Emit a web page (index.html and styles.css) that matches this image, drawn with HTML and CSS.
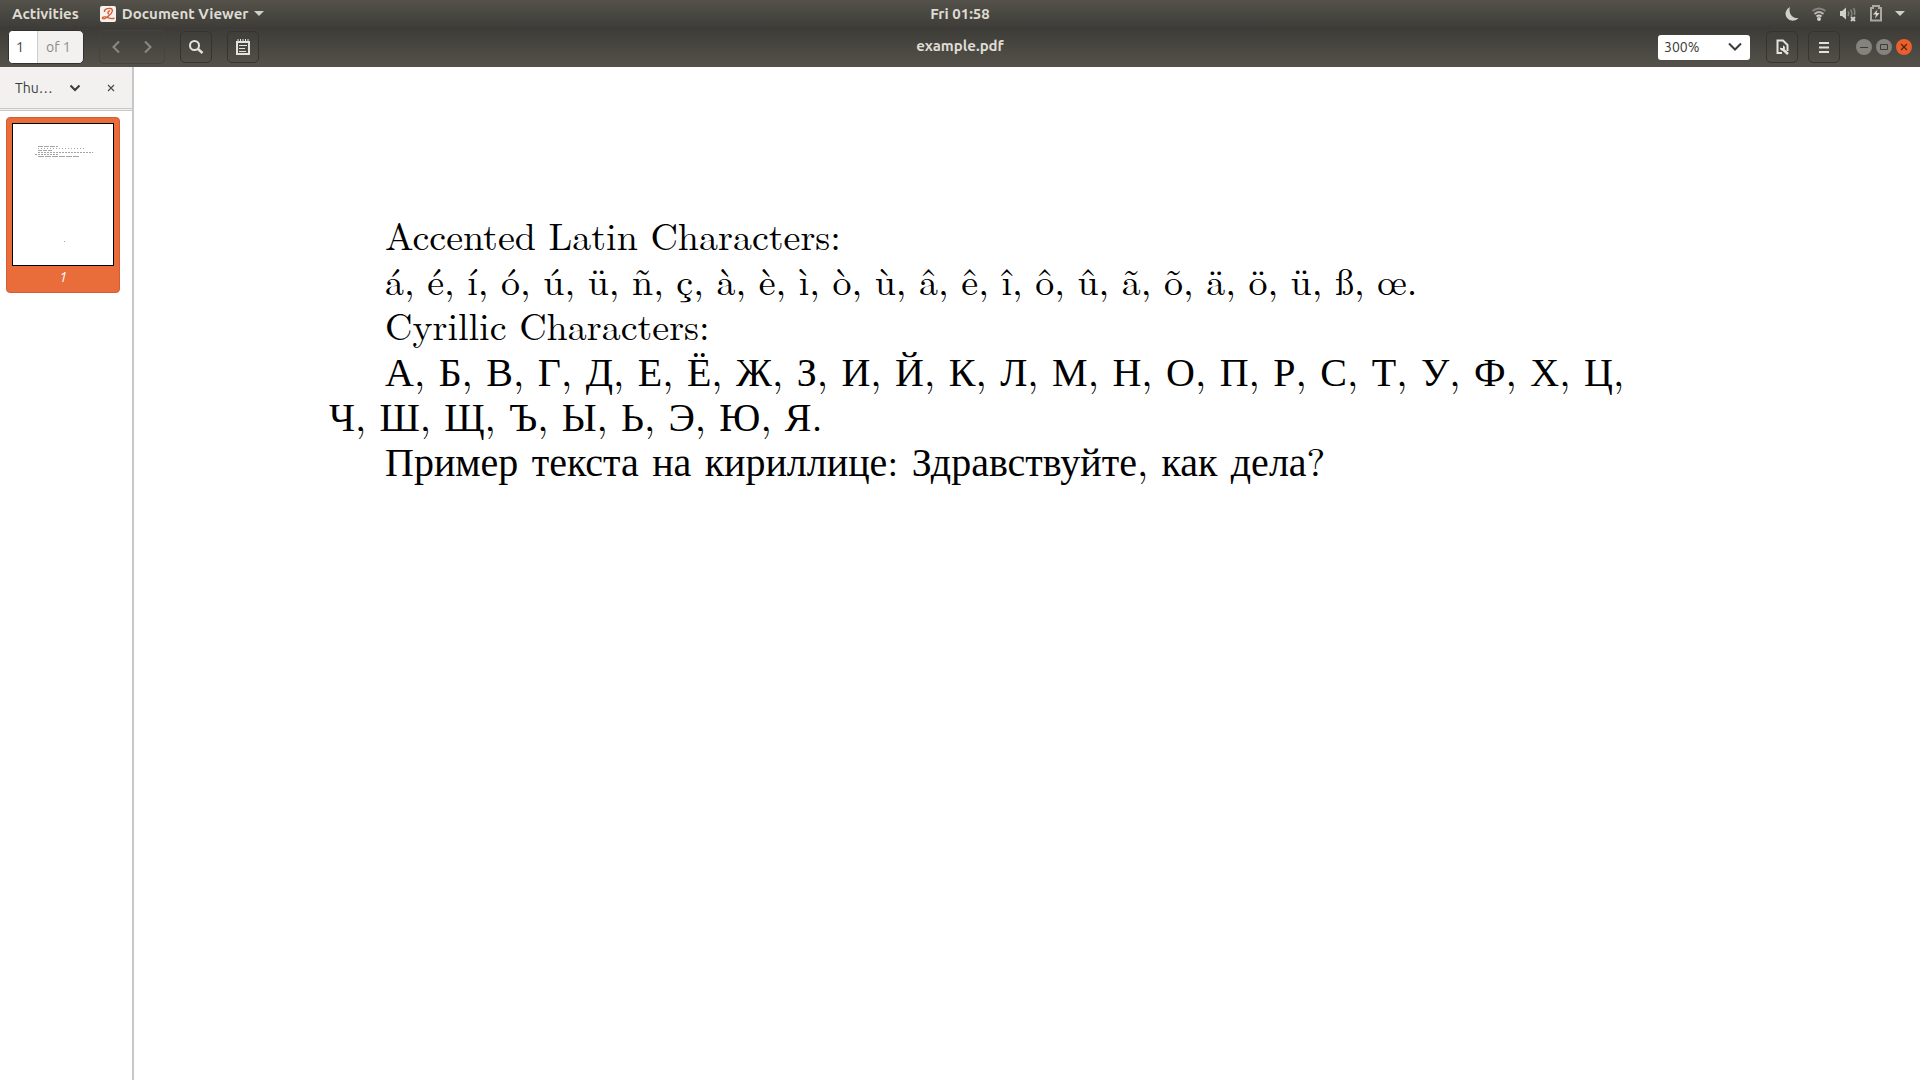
FILE: index.html
```
<!DOCTYPE html>
<html lang="en">
<head>
  <meta charset="UTF-8">
  <title>example.pdf</title>
  <link rel="stylesheet" href="styles.css">
</head>
<body>
  <header class="chrome">
    <div class="topbar">
      <div class="topbar-left">
        <button class="menu-item">Activities</button>
        <button class="menu-item app-menu">
          <svg width="16" height="16" viewBox="0 0 16 16"><rect width="16" height="16" rx="2" fill="#f4f2ef"/><path d="M4.500 6C4 3 8 2 10.500 2.500C14 3.500 12 7 9.500 9C7.500 11 4 13.500 2.500 12.500C2 10.500 6 10.500 8 11.500C10 13 12.500 12.800 14.500 12.300M10 5C8 4.500 7 7.500 9 8" fill="none" stroke="#dd5a31" stroke-width="1.400"/></svg>
          <span>Document Viewer</span>
          <svg width="10" height="6" viewBox="0 0 10 6"><path d="M0 0h10L5 5z" fill="#d0cfca"/></svg>
        </button>
      </div>
      <button class="menu-item clock">Fri 01:58</button>
      <div class="tray">
        <svg width="14" height="16" viewBox="0 0 14 16"><path d="M5 1A7.200 7.200 0 1 0 13.500 12C7.500 13 3 7 5 1z" fill="#d0cfca"/></svg>
        <svg width="16" height="16" viewBox="0 0 16 16" fill="none" stroke-width="2"><path d="M1.500 5Q8 0 14.500 5" stroke="#85837e"/><path d="M3.500 8Q8 4 12.500 8" stroke="#b5b3ad"/><path d="M5.500 10.500Q8 8.500 10.500 10.500" stroke="#d0cfca"/><circle cx="8" cy="13" r="2" fill="#d0cfca"/></svg>
        <svg width="18" height="16" viewBox="0 0 18 16" fill="none"><path d="M1 5h2l4-3.500v12L3 10H1z" fill="#d0cfca"/><path d="M9 5.500q1.500 2 0 4.500M11.500 3.500q2.500 4 .5 7M14.500 2q2 3 1 7" stroke="#85837e" stroke-width="1.500"/><path d="M12 11l4 4M16 11l-4 4" stroke="#d0cfca" stroke-width="2"/></svg>
        <svg width="14" height="17" viewBox="0 0 14 17" fill="none"><path d="M4 3V1h6v2h2v12.500H2V3z" stroke="#aaa8a2" stroke-width="2"/><path d="M8.500 4.500L4 9.500h3l-1 4 4.500-5.500h-3z" fill="#dddbd6"/></svg>
        <svg width="10" height="6" viewBox="0 0 10 6"><path d="M0 0h10L5 5z" fill="#d0cfca"/></svg>
      </div>
    </div>

    <div class="toolbar">
      <div class="tools">
        <div class="pager">
          <input class="page-input" type="text" value="1" aria-label="Page">
          <span class="page-total">of 1</span>
        </div>
        <div class="nav">
          <button class="tool" aria-label="Previous page"><svg width="8" height="14" viewBox="0 0 8 14"><path d="M7 1.500L1.500 7 7 12.500" fill="none" stroke="#8b8983" stroke-width="2"/></svg></button>
          <button class="tool" aria-label="Next page"><svg width="8" height="14" viewBox="0 0 8 14"><path d="M1 1.500L6.500 7 1 12.500" fill="none" stroke="#8b8983" stroke-width="2"/></svg></button>
        </div>
        <button class="tool framed" aria-label="Find"><svg width="16" height="16" viewBox="0 0 16 16"><circle cx="6.500" cy="6.500" r="4.500" fill="none" stroke="#e4e2dd" stroke-width="2"/><path d="M10 10l4.500 4" stroke="#e4e2dd" stroke-width="2.500"/></svg></button>
        <button class="tool framed" aria-label="Annotate"><svg width="14" height="18" viewBox="0 0 14 18"><path d="M1 4h12v12H1z" fill="none" stroke="#e4e2dd" stroke-width="2"/><path d="M2 1v4M4.500 1v4M7 1v4M9.500 1v4M12 1v4" stroke="#e4e2dd"/><path d="M3 7.500h8M3 10.500h6M3 13.500h7" stroke="#e4e2dd"/></svg></button>
      </div>
      <h1 class="title">example.pdf</h1>
      <div class="tools tools-right">
        <div class="drop zoom">
          <select aria-label="Zoom"><option>300%</option></select>
          <svg width="14" height="9" viewBox="0 0 14 9"><path d="M1 1l6 6 6-6" fill="none" stroke="#3c3b37" stroke-width="2"/></svg>
        </div>
        <button class="tool framed" aria-label="File options"><svg width="13" height="16" viewBox="0 0 13 16"><path d="M6 14H1.500V1.500H7L11.500 6v6" fill="none" stroke="#e4e2dd" stroke-width="2"/><path d="M6.500 10l5.500 5" stroke="#e4e2dd" stroke-width="2.500"/><path d="M4 8.500A2.500 2.500 0 0 0 8.500 10.500 2.500 2.500 0 0 0 7 6.500v2.500H5z" fill="#e4e2dd"/></svg></button>
        <button class="tool framed" aria-label="Menu"><svg width="10" height="11" viewBox="0 0 10 11"><path d="M0 1h10M0 5.500h10M0 10h10" stroke="#e4e2dd" stroke-width="2"/></svg></button>
        <div class="window-buttons">
          <button class="win" aria-label="Minimize"><svg width="8" height="8" viewBox="0 0 8 8"><path d="M0 4.500h8" stroke="#3c3b37"/></svg></button>
          <button class="win" aria-label="Maximize"><svg width="8" height="8" viewBox="0 0 8 8"><path d="M.5 1.500h7v5h-7z" fill="none" stroke="#3c3b37"/></svg></button>
          <button class="win close" aria-label="Close"><svg width="8" height="8" viewBox="0 0 8 8"><path d="M1 1l6 6M7 1L1 7" stroke="#4a2414" stroke-width="1.200"/></svg></button>
        </div>
      </div>
    </div>
  </header>

  <div class="viewer">
    <aside class="sidebar">
      <div class="sidebar-head">
        <div class="drop panel-select">
          <select aria-label="Side pane"><option>Thu…</option></select>
          <svg width="12" height="8" viewBox="0 0 12 8"><path d="M1.500 1.500L6 6l4.500-4.500" fill="none" stroke="#3c3b37" stroke-width="2"/></svg>
        </div>
        <button class="panel-close" aria-label="Close side pane"><svg width="8" height="8" viewBox="0 0 8 8"><path d="M1 1l6 6M7 1L1 7" stroke="#4c4b47" stroke-width="1.200"/></svg></button>
      </div>
      <a class="thumb" href="#page1">
        <svg class="thumb-page" viewBox="0 0 100 141" aria-hidden="true">
          <g stroke="#a5a5a5" stroke-width="1">
            <path d="M25 22.500h20" stroke-dasharray="5 1"/>
            <path d="M25 24.500h46" stroke-dasharray="1 2"/>
            <path d="M25 26.500h14" stroke-dasharray="4 1"/>
            <path d="M25 28.500h55" stroke-dasharray="2 1"/>
            <path d="M22 30.500h23" stroke-dasharray="2 1"/>
            <path d="M25 32.500h42" stroke-dasharray="6 1"/>
            <path d="M51 117.500h1"/>
          </g>
        </svg>
        <span class="thumb-label">1</span>
      </a>
    </aside>

    <main class="page" id="page1">
      <p>Accented Latin Characters:</p>
      <p>á, é, í, ó, ú, ü, ñ, ç, à, è, ì, ò, ù, â, ê, î, ô, û, ã, õ, ä, ö, ü, ß, œ.</p>
      <p>Cyrillic Characters:</p>
      <p class="cyrillic justified" lang="ru">А, Б, В, Г, Д, Е, Ё, Ж, З, И, Й, К, Л, М, Н, О, П, Р, С, Т, У, Ф, Х, Ц,</p>
      <p class="cyrillic continued" lang="ru">Ч, Ш, Щ, Ъ, Ы, Ь, Э, Ю, Я.</p>
      <p class="cyrillic" lang="ru">Пример текста на кириллице: Здравствуйте, как дела?</p>
    </main>
  </div>
</body>
</html>
```
FILE: styles.css
```
* {
  box-sizing: border-box;
}
body {
  margin: 0;
  min-height: 100vh;
  display: flex;
  flex-direction: column;
  background: #fff;
  font-family: Ubuntu, "Open Sans", sans-serif;
  font-size: 14px;
  color: #3c3b37;
}
button, input, select {
  font: inherit;
  color: inherit;
  border: 0;
  padding: 0;
  background: none;
}
svg {
  display: block;
  flex: none;
}

/* top panel and toolbar */
.topbar {
  height: 27px;
  display: grid;
  grid-template-columns: 1fr auto 1fr;
  align-items: center;
  padding: 0 12px;
  background: linear-gradient(#54524a, #3e3d39);
  color: #dfdbd2;
}
.topbar-left {
  display: flex;
  gap: 21px;
}
.menu-item {
  font-size: 15px;
  line-height: 24px;
  font-weight: 600;
}
.app-menu {
  display: flex;
  align-items: center;
  gap: 6px;
}
.tray {
  display: flex;
  justify-content: flex-end;
  align-items: center;
  gap: 12px;
  padding-right: 3px;
}
.toolbar {
  height: 40px;
  display: grid;
  grid-template-columns: 1fr auto 1fr;
  align-items: center;
  padding: 0 8px;
  background: linear-gradient(#3c3b37, #54524a);
}
.title {
  margin: 0;
  font-size: 15px;
  line-height: 24px;
  padding-bottom: 2px;
  font-weight: 700;
  color: #dfdbd2;
}
.tools {
  display: flex;
  align-items: center;
  gap: 15px;
}
.tools-right {
  justify-content: flex-end;
  gap: 10px;
}
.pager {
  display: flex;
  height: 34px;
  border: 1px solid #32312e;
  border-radius: 5px;
  overflow: hidden;
  background: #f2f1f0;
}
.page-input {
  width: 29px;
  padding-left: 7px;
  background: #fff;
  border-right: 1px solid #cfcdc9;
}
.page-total {
  padding: 0 12px 0 8px;
  line-height: 32px;
  color: #8d8c89;
}
.tool {
  width: 32px;
  height: 32px;
  display: grid;
  place-items: center;
}
.nav {
  display: flex;
  border: 1px solid #45443f;
  border-radius: 5px;
}
.framed {
  border: 1px solid #35342f;
  border-radius: 5px;
}
.drop {
  position: relative;
}
.drop select {
  width: 100%;
  height: 100%;
  appearance: none;
}
.drop svg {
  position: absolute;
  top: 50%;
  right: 8px;
  transform: translateY(-50%);
  pointer-events: none;
}
.zoom {
  width: 92px;
  height: 25px;
  margin-right: 6px;
  border-radius: 3px;
  background: #fff;
}
.zoom select {
  padding-left: 6px;
}
.window-buttons {
  display: flex;
  gap: 4px;
  padding-left: 6px;
}
.win {
  width: 16px;
  height: 16px;
  display: grid;
  place-items: center;
  border-radius: 50%;
  background: #85837e;
}
.close {
  background: #ea5f2b;
}

/* side pane */
.viewer {
  flex: 1;
  display: flex;
}
.sidebar {
  flex: none;
  width: 134px;
  border-right: 2px solid #c8c7c5;
}
.sidebar-head {
  height: 44px;
  display: flex;
  align-items: center;
  justify-content: space-between;
  padding: 0 17px 0 15px;
  background: #f2f1f0;
  border-bottom: 3px double #c8c7c5;
}
.panel-select {
  width: 74px;
  height: 28px;
}
.thumb {
  display: flex;
  flex-direction: column;
  align-items: center;
  margin: 6px 12px 0 6px;
  padding: 5px 6px 4px;
  border: 1px solid #d05f35;
  border-radius: 4px;
  background: #e96d3b;
  color: #fff;
  text-decoration: none;
}
.thumb-page {
  width: 102px;
  background: #fff;
  border: 1px solid #000;
}
.thumb-label {
  line-height: 22px;
  font-style: italic;
}

/* document */
.page {
  flex: 1;
  padding: 145px 296px 0 195px;
  font-family: "Latin Modern Roman", "CMU Serif", "Liberation Serif", serif;
  font-size: 38px;
  line-height: 45px;
  color: #000;
}
.page p {
  margin: 0;
  padding-left: 56px;
}
.page .cyrillic {
  font-size: 40px;
}
.page .justified {
  text-align-last: justify;
}
.page .continued {
  padding-left: 0;
}
```
